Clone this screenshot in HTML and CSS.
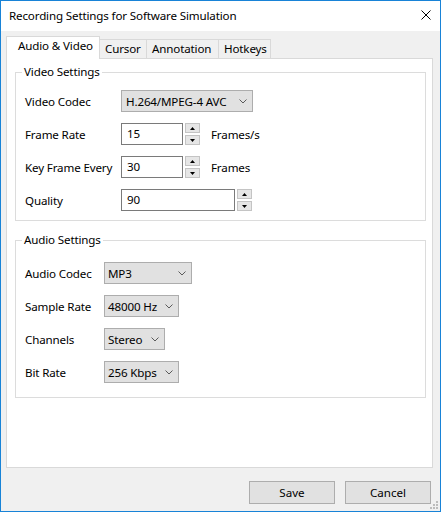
FILE: index.html
```html
<!DOCTYPE html>
<html>
<head>
<meta charset="utf-8">
<link rel="stylesheet" href="styles.css">
</head>
<body>
<div class="window">
  <div class="titlebar">
    <span class="title">Recording Settings for Software Simulation</span>
    <svg class="close" width="10" height="10" viewBox="0 0 10 10"><path d="M0.5 0.5 L9.5 9.5 M9.5 0.5 L0.5 9.5" stroke="#000" stroke-width="1" fill="none"/></svg>
  </div>
  <div class="client">
    <div class="tabs">
      <div class="tab active tab-av">Audio &amp; Video</div>
      <div class="tab tab-cursor">Cursor</div>
      <div class="tab tab-annot">Annotation</div>
      <div class="tab tab-hot">Hotkeys</div>
    </div>
    <div class="panel">
      <fieldset class="group group-video">
        <legend>Video Settings</legend>
        <div class="row">
          <span class="label">Video Codec</span>
          <div class="select sel-codec"><span>H.264/MPEG-4 AVC</span><svg class="chev" width="8" height="5" viewBox="0 0 8 5"><path d="M0.5 0.5 L4 4 L7.5 0.5" stroke="#5a5a5a" fill="none"/></svg></div>
        </div>
        <div class="row">
          <span class="label">Frame Rate</span>
          <div class="input in-short">15</div>
          <div class="spin"><div class="spin-btn"><svg width="5" height="3" viewBox="0 0 5 3"><path d="M0 3 L2.5 0 L5 3 Z" fill="#000"/></svg></div><div class="spin-btn"><svg width="5" height="3" viewBox="0 0 5 3"><path d="M0 0 L5 0 L2.5 3 Z" fill="#000"/></svg></div></div>
          <span class="unit">Frames/s</span>
        </div>
        <div class="row">
          <span class="label">Key Frame Every</span>
          <div class="input in-short">30</div>
          <div class="spin"><div class="spin-btn"><svg width="5" height="3" viewBox="0 0 5 3"><path d="M0 3 L2.5 0 L5 3 Z" fill="#000"/></svg></div><div class="spin-btn"><svg width="5" height="3" viewBox="0 0 5 3"><path d="M0 0 L5 0 L2.5 3 Z" fill="#000"/></svg></div></div>
          <span class="unit">Frames</span>
        </div>
        <div class="row">
          <span class="label">Quality</span>
          <div class="input in-long">90</div>
          <div class="spin"><div class="spin-btn"><svg width="5" height="3" viewBox="0 0 5 3"><path d="M0 3 L2.5 0 L5 3 Z" fill="#000"/></svg></div><div class="spin-btn"><svg width="5" height="3" viewBox="0 0 5 3"><path d="M0 0 L5 0 L2.5 3 Z" fill="#000"/></svg></div></div>
        </div>
      </fieldset>
      <fieldset class="group group-audio">
        <legend>Audio Settings</legend>
        <div class="row">
          <span class="label label-audio">Audio Codec</span>
          <div class="select sel-acodec"><span>MP3</span><svg class="chev" width="8" height="5" viewBox="0 0 8 5"><path d="M0.5 0.5 L4 4 L7.5 0.5" stroke="#5a5a5a" fill="none"/></svg></div>
        </div>
        <div class="row">
          <span class="label label-audio">Sample Rate</span>
          <div class="select sel-rate"><span>48000 Hz</span><svg class="chev" width="8" height="5" viewBox="0 0 8 5"><path d="M0.5 0.5 L4 4 L7.5 0.5" stroke="#5a5a5a" fill="none"/></svg></div>
        </div>
        <div class="row">
          <span class="label label-audio">Channels</span>
          <div class="select sel-chan"><span>Stereo</span><svg class="chev" width="8" height="5" viewBox="0 0 8 5"><path d="M0.5 0.5 L4 4 L7.5 0.5" stroke="#5a5a5a" fill="none"/></svg></div>
        </div>
        <div class="row">
          <span class="label label-audio">Bit Rate</span>
          <div class="select sel-rate"><span>256 Kbps</span><svg class="chev" width="8" height="5" viewBox="0 0 8 5"><path d="M0.5 0.5 L4 4 L7.5 0.5" stroke="#5a5a5a" fill="none"/></svg></div>
        </div>
      </fieldset>
    </div>
    <div class="footer">
      <button class="btn">Save</button>
      <button class="btn">Cancel</button>
    </div>
    <svg class="grip" width="8" height="8" viewBox="0 0 8 8" fill="#bcbcbc">
      <rect x="6" y="0" width="2" height="2"/>
      <rect x="3" y="3" width="2" height="2"/><rect x="6" y="3" width="2" height="2"/>
      <rect x="0" y="6" width="2" height="2"/><rect x="3" y="6" width="2" height="2"/><rect x="6" y="6" width="2" height="2"/>
    </svg>
  </div>
</div>
</body>
</html>
```

FILE: styles.css
```css
* { box-sizing: border-box; }
html, body { margin: 0; padding: 0; }
body {
  font-family: "Noto Sans", "Open Sans", sans-serif;
  font-size: 11.6px;
  letter-spacing: -0.15px;
  color: #000;
  background: #fff;
}
.window {
  width: 441px;
  height: 512px;
  border: 1px solid #1883d7;
  display: flex;
  flex-direction: column;
  position: relative;
}
.titlebar {
  height: 30px;
  background: #fff;
  display: flex;
  align-items: center;
  justify-content: space-between;
  padding: 0 9px 0 8px;
}
.title { line-height: 16px; margin-top: -1px; }
.close { display: block; margin-top: -3px; }
.client {
  flex: 1;
  background: #f0f0f0;
  display: flex;
  flex-direction: column;
  padding-top: 5px;
}
.tabs {
  display: flex;
  align-items: flex-end;
  height: 22px;
  padding-left: 5px;
}
.tab {
  height: 19px;
  line-height: 17px;
  border: 1px solid #d9d9d9;
  border-bottom: none;
  background: #f0f0f0;
  padding-left: 5px;
  margin-left: -1px;
  white-space: nowrap;
}
.tab.active {
  height: 23px;
  margin-bottom: -1px;
  margin-left: 0;
  background: #fff;
  padding-left: 11px;
  padding-top: 0;
  position: relative;
  z-index: 1;
}
.tab-av { width: 94px; }
.tab-cursor { width: 48px; }
.tab-annot { width: 73px; }
.tab-hot { width: 53px; }
.panel {
  flex: 1;
  background: #fff;
  border: 1px solid #d9d9d9;
  margin: 0 7px 0 5px;
  padding: 5px 6px 0 8px;
  display: flex;
  flex-direction: column;
}
.group {
  margin: 0;
  border: 1px solid #dcdcdc;
  padding: 10px 8px 9px 9px;
  min-width: 0;
  display: flex;
  flex-direction: column;
  gap: 11px;
}
.group legend {
  padding: 0 2px;
  margin-left: -3px;
  line-height: 16px;
}
.group-audio {
  margin-top: 11px;
  padding-top: 14px;
  padding-bottom: 14px;
}
.row {
  display: flex;
  align-items: center;
  height: 22px;
}
.label { width: 96px; flex: none; }
.label-audio { width: 79px; }
.select {
  height: 22px;
  background: #e1e1e1;
  border: 1px solid #adadad;
  display: flex;
  align-items: center;
  justify-content: space-between;
  padding: 0 5px 0 3px;
  white-space: nowrap;
}
.chev { display: block; flex: none; }
.sel-codec { width: 132px; padding-left: 4px; }
.sel-acodec { width: 88px; }
.sel-rate { width: 75px; }
.sel-chan { width: 61px; }
.input {
  height: 22px;
  background: #fff;
  border: 1px solid #7a7a7a;
  padding-left: 5px;
  line-height: 20px;
}
.in-short { width: 62px; }
.in-long { width: 114px; }
.spin {
  width: 15px;
  height: 22px;
  margin-left: 2px;
  display: flex;
  flex-direction: column;
  justify-content: space-between;
}
.spin-btn {
  height: 10px;
  background: #e6e6e6;
  border: 1px solid #c4c4c4;
  display: flex;
  align-items: center;
  justify-content: center;
}
.spin-btn svg { display: block; }
.unit { margin-left: 11px; }
.footer {
  display: flex;
  justify-content: flex-end;
  gap: 10px;
  margin-top: 13px;
  padding: 0 9px 7px 0;
}
.btn {
  width: 86px;
  height: 23px;
  background: #e1e1e1;
  border: 1px solid #adadad;
  font: inherit;
  color: #000;
  padding: 0;
}
.grip {
  position: absolute;
  right: 2px;
  bottom: 2px;
}
```
